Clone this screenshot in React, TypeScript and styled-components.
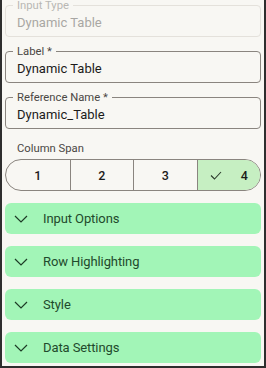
import React from "react";
import styled, { createGlobalStyle } from "styled-components";

const GlobalStyle = createGlobalStyle`
  html, body {
    margin: 0;
    padding: 0;
    background: #f8f7f3;
  }
  body {
    font-family: Roboto, "Liberation Sans", sans-serif;
  }
`;

const spans = [1, 2, 3, 4];
const sections = ["Input Options", "Row Highlighting", "Style", "Data Settings"];

const Field = ({
  label,
  value,
  disabled,
}: {
  label: string;
  value: string;
  disabled?: boolean;
}) => (
  <FieldBox $disabled={disabled}>
    <FieldLabel $disabled={disabled}>{label}</FieldLabel>
    <FieldValue $disabled={disabled}>{value}</FieldValue>
  </FieldBox>
);

const Chevron = () => (
  <svg width="14" height="8" viewBox="0 0 14 8" fill="none">
    <path d="M1 1l6 6 6-6" stroke="#1d3b26" strokeWidth="1.2" />
  </svg>
);

const Check = () => (
  <svg width="12" height="9" viewBox="0 0 12 9" fill="none">
    <path d="M1 4.5l3.5 3.5L11 1" stroke="#2c3a2c" strokeWidth="1.1" />
  </svg>
);

const App = () => (
  <Page>
    <GlobalStyle />
    <Field label="Input Type" value="Dynamic Table" disabled />
    <Field label="Label *" value="Dynamic Table" />
    <Field label="Reference Name *" value="Dynamic_Table" />
    <SpanLabel>Column Span</SpanLabel>
    <Segmented>
      {spans.map((n) => (
        <Segment key={n} $selected={n === 4}>
          {n === 4 && <Check />}
          {n}
        </Segment>
      ))}
    </Segmented>
    <Sections>
      {sections.map((s) => (
        <Section key={s}>
          <Chevron />
          <SectionTitle>{s}</SectionTitle>
        </Section>
      ))}
    </Sections>
  </Page>
);

export default App;

const Page = styled.div`
  box-sizing: border-box;
  height: 368px;
  width: 266px;
  padding: 5px 3px 0 3px;
  border: 2px solid #2e2e2e;
  border-top: none;
  background: #f8f7f3;
  display: flex;
  flex-direction: column;
  overflow: hidden;
`;

const FieldBox = styled.div<{ $disabled?: boolean }>`
  position: relative;
  box-sizing: border-box;
  height: 32px;
  margin-bottom: 14px;
  border: 1px solid ${({ $disabled }) => ($disabled ? "#e4e1db" : "#8a857f")};
  border-radius: 4px;
  display: flex;
  align-items: center;
  padding: 2px 11px 0;
`;

const FieldLabel = styled.span<{ $disabled?: boolean }>`
  position: absolute;
  top: -6px;
  left: 7px;
  padding: 0 4px;
  background: #f8f7f3;
  font-size: 11.25px;
  line-height: 12px;
  color: ${({ $disabled }) => ($disabled ? "#b9b7b3" : "#4a4744")};
`;

const FieldValue = styled.span<{ $disabled?: boolean }>`
  font-size: 13px;
  color: ${({ $disabled }) => ($disabled ? "#a9a7a3" : "#1c1b1a")};
`;

const SpanLabel = styled.div`
  margin: -1px 0 0 12px;
  font-size: 11.25px;
  line-height: 14px;
  color: #4a4744;
`;

const Segmented = styled.div`
  box-sizing: border-box;
  margin-top: 3px;
  height: 32px;
  display: grid;
  grid-template-columns: repeat(4, 1fr);
  border: 1px solid #8a857f;
  border-radius: 16px;
  overflow: hidden;
`;

const Segment = styled.div<{ $selected?: boolean }>`
  display: flex;
  align-items: center;
  justify-content: center;
  gap: 19px;
  font-size: 12.5px;
  font-weight: 500;
  color: #1c1b1a;
  background: ${({ $selected }) => ($selected ? "#c6efc2" : "transparent")};
  & + & {
    border-left: 1px solid #8a857f;
  }
`;

const Sections = styled.div`
  margin-top: 12px;
  display: flex;
  flex-direction: column;
  gap: 12px;
`;

const Section = styled.div`
  height: 31px;
  border-radius: 6px;
  background: #a2f5b7;
  display: flex;
  align-items: center;
  padding-left: 9px;
  gap: 15px;
`;

const SectionTitle = styled.span`
  font-size: 13px;
  letter-spacing: -0.1px;
  color: #1f4a2c;
`;
